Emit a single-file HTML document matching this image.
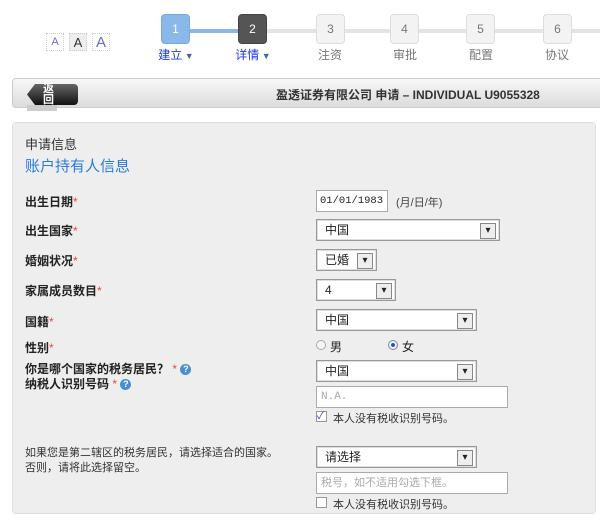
<!DOCTYPE html>
<html><head><meta charset="utf-8"><style>
*{margin:0;padding:0;box-sizing:border-box}
body{width:600px;height:526px;background:#fff;position:relative;overflow:hidden;font-family:"Liberation Sans","Noto Sans CJK SC",sans-serif;font-size:12px;color:#222}
.a{position:absolute}
.fs{position:absolute;top:33px;width:18px;height:18px;border:1px dotted #ccc;text-align:center;line-height:17px;color:#6a6abf}
.step{position:absolute;top:14px;width:29px;height:30px;border-radius:4px;background:#f3f3f3;border:1px solid #ddd;text-align:center;line-height:29px;color:#777;font-size:12px}
.lbl{position:absolute;top:46px;font-size:12px;color:#777;width:60px;text-align:center}
.lb{position:absolute;left:25px;font-weight:bold;font-size:12px;color:#222}
.lb i{color:#e44;font-style:normal;font-weight:normal}
.sel{position:absolute;left:316px;height:22px;background:#fff;border:1px solid #999;box-shadow:inset 0 0 0 1px #ddd;padding-left:8px;line-height:20px;font-size:12px}
.sel:after{content:"▾";position:absolute;right:3px;top:3px;width:14px;height:14px;border:1px solid #888;background:#eee;font-size:10px;line-height:13px;text-align:center;color:#222}
.inp{position:absolute;left:316px;height:22px;background:#fff;border:1px solid #aaa;padding-left:4px;line-height:20px;font-family:"Liberation Mono",monospace;font-size:11px}
.chk{position:absolute;left:316px;width:11px;height:11px;border:1px solid #999;background:#fff;font-size:10px;line-height:9px;color:#33c}
.q{display:inline-block;width:11px;height:11px;border-radius:50%;background:#4a8fd0;color:#fff;font-size:9px;line-height:11px;text-align:center;vertical-align:1px}
</style></head><body>
<div class="fs" style="left:46px;font-size:11px">A</div>
<div class="fs" style="left:69px;background:#eee;color:#333;font-size:13px">A</div>
<div class="fs" style="left:92px;font-size:15px">A</div>
<div class="a" style="left:190px;top:29px;width:48px;height:4px;background:#8ab8e8"></div>
<div class="a" style="left:267px;top:29px;width:333px;height:4px;background:#e4e4e4"></div>
<div class="step" style="left:161px;background:#8ab8e8;border-color:#7aa8d8;color:#fff">1</div>
<div class="step" style="left:238px;background:#555;border-color:#444;color:#fff">2</div>
<div class="step" style="left:316px">3</div>
<div class="step" style="left:390px">4</div>
<div class="step" style="left:466px">5</div>
<div class="step" style="left:543px">6</div>
<div class="lbl" style="left:146px;color:#1a3ae0">建立<span style="color:#3a6aa0;font-size:9px"> ▼</span></div>
<div class="lbl" style="left:223px;color:#1a3ae0">详情<span style="color:#3a6aa0;font-size:9px"> ▼</span></div>
<div class="lbl" style="left:300px">注资</div>
<div class="lbl" style="left:375px">审批</div>
<div class="lbl" style="left:451px">配置</div>
<div class="lbl" style="left:527px">协议</div>
<div class="a" style="left:12px;top:78px;width:600px;height:30px;border:1px solid #ccc;border-radius:4px;background:linear-gradient(#f8f8f8,#dcdcdc)"></div>
<div class="a" style="left:27px;top:84px;width:51px;height:21px;background:linear-gradient(#666,#111);border-radius:4px;clip-path:polygon(8px 0,100% 0,100% 100%,8px 100%,0 50%)"></div>
<div class="a" style="left:27px;top:105px;width:30px;height:6px;background:#ccc"></div>
<div class="a" style="left:43px;top:84px;color:#fff;font-weight:bold;font-size:11px;line-height:11px;width:14px">返回</div>
<div class="a" style="left:276px;top:86px;font-weight:bold;font-size:12px;color:#333">盈透证券有限公司 申请 – INDIVIDUAL U9055328</div>
<div class="a" style="left:12px;top:122px;width:584px;height:392px;background:#eee;border:1px solid #ddd;border-radius:4px"></div>
<div class="a" style="left:25px;top:134px;font-size:13px;color:#333">申请信息</div>
<div class="a" style="left:25px;top:155px;font-size:15px;color:#2a7ae0">账户持有人信息</div>
<div class="lb" style="top:193px">出生日期<i>*</i></div>
<div class="lb" style="top:222px">出生国家<i>*</i></div>
<div class="lb" style="top:252px">婚姻状况<i>*</i></div>
<div class="lb" style="top:282px">家属成员数目<i>*</i></div>
<div class="lb" style="top:313px">国籍<i>*</i></div>
<div class="lb" style="top:339px">性别<i>*</i></div>
<div class="lb" style="top:360px">你是哪个国家的税务居民？ <i>*</i> <span class="q">?</span></div>
<div class="lb" style="top:375px">纳税人识别号码 <i>*</i> <span class="q">?</span></div>
<div class="a" style="left:25px;top:446px;font-size:11px;color:#333;width:260px;line-height:15px">如果您是第二辖区的税务居民，请选择适合的国家。否则，请将此选择留空。</div>
<div class="inp" style="top:190px;width:72px;font-size:10.5px;padding-left:3px">01/01/1983</div>
<div class="a" style="left:396px;top:194px;font-size:11px;color:#444">(月/日/年)</div>
<div class="sel" style="top:219px;width:184px">中国</div>
<div class="sel" style="top:249px;width:61px">已婚</div>
<div class="sel" style="top:279px;width:80px">4</div>
<div class="sel" style="top:309px;width:161px">中国</div>
<div class="a" style="left:316px;top:340px;width:10px;height:10px;border-radius:50%;border:1px solid #aaa;background:#f5f5f5"></div>
<div class="a" style="left:330px;top:338px;font-size:12px">男</div>
<div class="a" style="left:388px;top:340px;width:10px;height:10px;border-radius:50%;border:1px solid #888;background:radial-gradient(#1a5ab0 30%,#eef 40%)"></div>
<div class="a" style="left:402px;top:338px;font-size:12px">女</div>
<div class="sel" style="top:360px;width:161px">中国</div>
<div class="inp" style="top:386px;width:192px;color:#aaa">N.A.</div>
<div class="chk" style="top:411px">✓</div>
<div class="a" style="left:333px;top:410px;font-size:11px;color:#333">本人没有税收识别号码。</div>
<div class="sel" style="top:446px;width:161px">请选择</div>
<div class="inp" style="top:472px;width:192px;color:#aaa;font-family:'Liberation Sans','Noto Sans CJK SC',sans-serif">税号，如不适用勾选下框。</div>
<div class="chk" style="top:497px"></div>
<div class="a" style="left:333px;top:496px;font-size:11px;color:#333">本人没有税收识别号码。</div>
</body></html>
